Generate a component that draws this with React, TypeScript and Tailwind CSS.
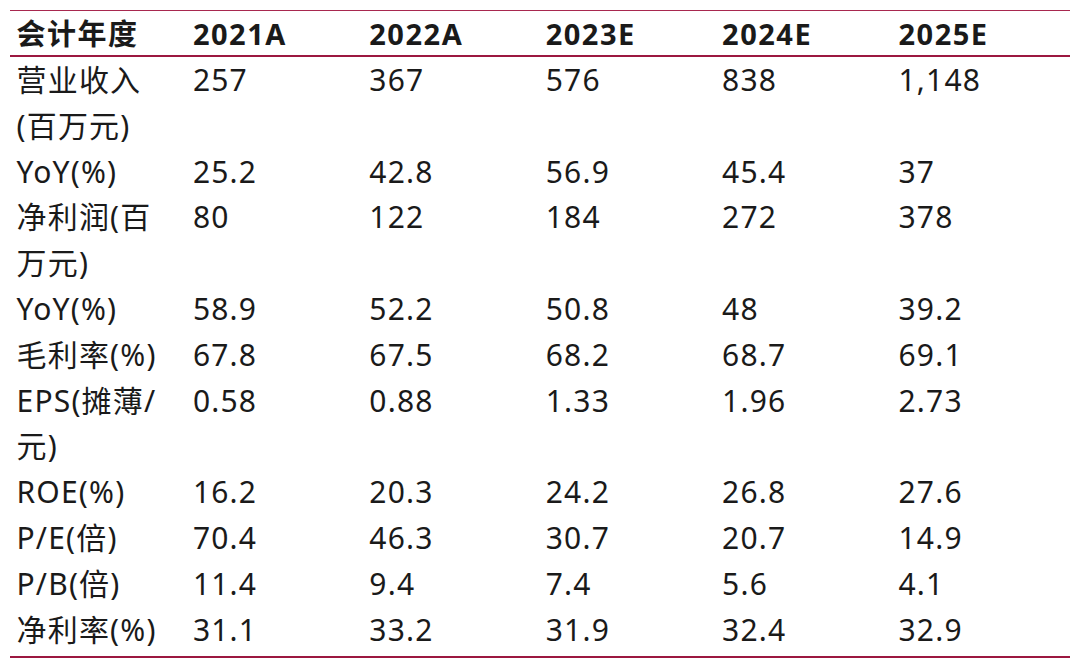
import React from "react";

const header = ["会计年度", "2021A", "2022A", "2023E", "2024E", "2025E"];

const rows: { label: string[]; values: string[] }[] = [
  { label: ["营业收入", "(百万元)"], values: ["257", "367", "576", "838", "1,148"] },
  { label: ["YoY(%)"], values: ["25.2", "42.8", "56.9", "45.4", "37"] },
  { label: ["净利润(百", "万元)"], values: ["80", "122", "184", "272", "378"] },
  { label: ["YoY(%)"], values: ["58.9", "52.2", "50.8", "48", "39.2"] },
  { label: ["毛利率(%)"], values: ["67.8", "67.5", "68.2", "68.7", "69.1"] },
  { label: ["EPS(摊薄/", "元)"], values: ["0.58", "0.88", "1.33", "1.96", "2.73"] },
  { label: ["ROE(%)"], values: ["16.2", "20.3", "24.2", "26.8", "27.6"] },
  { label: ["P/E(倍)"], values: ["70.4", "46.3", "30.7", "20.7", "14.9"] },
  { label: ["P/B(倍)"], values: ["11.4", "9.4", "7.4", "5.6", "4.1"] },
  { label: ["净利率(%)"], values: ["31.1", "33.2", "31.9", "32.4", "32.9"] },
];

export default function App() {
  return (
    <div
      className="w-[1080px] h-[670px] bg-white pt-[10px] px-[10px] text-[#1a1a1a]"
      style={{ fontFamily: '"Noto Sans", "Noto Sans CJK SC", sans-serif' }}
    >
      <div className="w-[1060px] border-t border-[#a8284f]">
        <div className="grid grid-cols-[repeat(5,176.4px)_1fr] pl-[6.5px] h-[46px] items-center border-b-2 border-[#9c1840] text-[29px] font-bold leading-[45px] tracking-[1.5px]">
          {header.map((h) => (
            <div key={h}>{h}</div>
          ))}
        </div>
        <div className="border-b-2 border-[#9c1840] pb-[4px]">
          {rows.map((r, i) => (
            <div
              key={i}
              className="grid grid-cols-[repeat(5,176.4px)_1fr] pl-[6.5px] text-[30px] leading-[45.8px] tracking-[1.2px]"
            >
              <div className="whitespace-nowrap">
                {r.label.map((l, j) => (
                  <div key={j}>{l}</div>
                ))}
              </div>
              {r.values.map((v, j) => (
                <div key={j}>{v}</div>
              ))}
            </div>
          ))}
        </div>
      </div>
    </div>
  );
}
